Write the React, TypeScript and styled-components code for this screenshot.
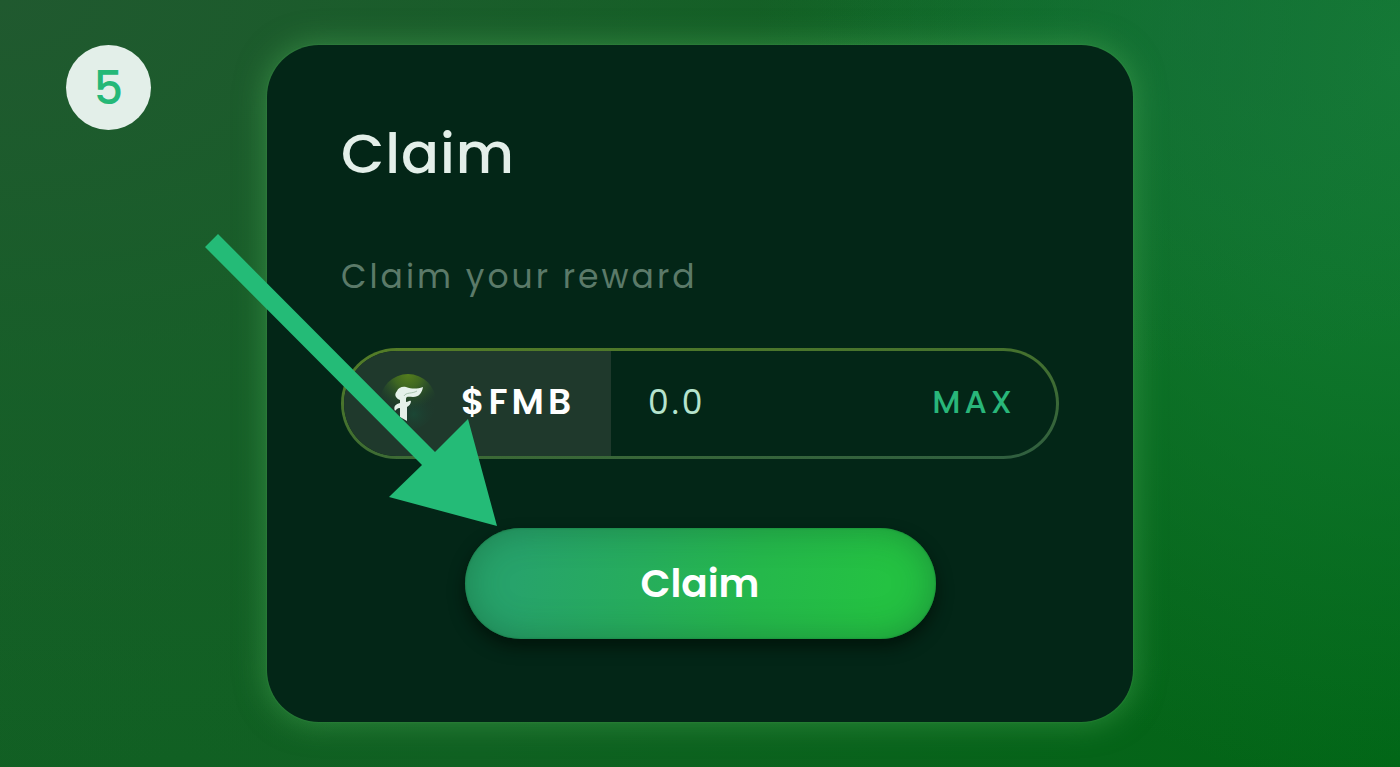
import React, { useState } from "react";
import styled, { createGlobalStyle } from "styled-components";

const GlobalStyle = createGlobalStyle`
  *, *::before, *::after { box-sizing: border-box; }
  body { margin: 0; background: #0a621e; }
  body, button, input { font-family: Poppins, Inter, "Liberation Sans", sans-serif; }
`;

const Page = styled.main`
  min-height: 100vh;
  display: grid;
  grid-template-columns: minmax(0, 1fr) minmax(0, 866px) minmax(0, 1fr);
  align-items: start;
  padding: 45px 0;
  background:
    radial-gradient(ellipse 28% 45% at 86% 4%, rgba(24, 108, 60, 0.5), rgba(24, 110, 60, 0) 100%),
    radial-gradient(ellipse 46% 95% at 100% 8%, #147d35 0%, rgba(18, 122, 50, 0.8) 35%, rgba(12, 110, 36, 0) 100%),
    radial-gradient(ellipse 95% 100% at 0% 0%, #20592f 0%, rgba(27, 94, 44, 0.6) 50%, rgba(22, 98, 38, 0) 100%),
    linear-gradient(100deg, #125f24 0%, #106122 40%, #066419 80%, #016616 100%);
`;

const StepBadge = styled.div`
  width: 85px;
  height: 85px;
  margin-left: 66px;
  display: flex;
  align-items: center;
  justify-content: center;
  border-radius: 50%;
  background: #e3efe9;
  color: #25b877;
  font-size: 46px;
  font-weight: 500;
  line-height: 86px;
`;

const Card = styled.section`
  position: relative;
  display: flex;
  flex-direction: column;
  padding: 73px 74px 83px;
  border-radius: 52px;
  background: #032617;
  box-shadow: 0 0 2px rgba(70, 160, 80, 0.6), 0 0 30px 1px rgba(75, 170, 85, 0.55);
`;

const Title = styled.h1`
  margin: 0;
  color: #e3efe9;
  font-size: 56px;
  font-weight: 500;
  line-height: 72px;
  letter-spacing: 1px;
`;

const Caption = styled.label`
  margin-top: 67px;
  color: #5b7a69;
  font-size: 33px;
  font-weight: 400;
  line-height: 40px;
  letter-spacing: 3px;
`;

const AmountField = styled.div`
  display: flex;
  height: 111px;
  margin-top: 51px;
  border: 3px solid transparent;
  border-radius: 56px;
  overflow: hidden;
  background:
    linear-gradient(#032617, #032617) padding-box,
    linear-gradient(174deg, #557d27 0%, #43702f 45%, #2f5e40 100%) border-box;
`;

const TokenTag = styled.div`
  display: flex;
  flex: none;
  align-items: center;
  gap: 25px;
  width: 267px;
  padding: 0 0 4px 36px;
  background: #1f392c;
  color: #fff;
  font-size: 36px;
  font-weight: 600;
  letter-spacing: 4px;
`;

const AmountInput = styled.input`
  flex: 1;
  min-width: 0;
  padding: 0 0 2px 37px;
  border: 0;
  outline: 0;
  background: none;
  color: #b5e3cd;
  font-size: 33px;
  font-weight: 400;
  letter-spacing: 3px;
`;

const MaxButton = styled.button`
  padding: 0 40px 3px 16px;
  border: 0;
  background: none;
  color: #29b67a;
  font-size: 32px;
  font-weight: 500;
  letter-spacing: 4px;
  cursor: pointer;
`;

const ClaimButton = styled.button`
  align-self: center;
  width: 471px;
  max-width: 100%;
  height: 111px;
  margin-top: 69px;
  padding: 0;
  border: 0;
  border-radius: 56px;
  background: linear-gradient(100deg, #27a36b 12%, #26ad5c 38%, #25b84b 62%, #24c242 88%);
  box-shadow:
    inset 0 0 36px rgba(20, 80, 45, 0.42),
    inset 0 0 2px rgba(10, 90, 40, 0.6),
    0 8px 16px rgba(0, 12, 5, 0.65);
  color: #fff;
  font-size: 39px;
  font-weight: 600;
  cursor: pointer;
`;

const Pointer = styled.svg`
  position: absolute;
  left: -62px;
  top: 189px;
  pointer-events: none;
`;

function TokenLogo() {
  return (
    <svg width="56" height="60" viewBox="0 0 56 60" aria-hidden="true">
      <defs>
        <radialGradient id="coinTop" cx="28" cy="2" r="36" gradientUnits="userSpaceOnUse">
          <stop offset="0" stopColor="#557e1d" />
          <stop offset="0.4" stopColor="#3e6622" />
          <stop offset="1" stopColor="#204a2b" stopOpacity="0" />
        </radialGradient>
        <radialGradient id="coinBottom" cx="34" cy="42" r="24" gradientUnits="userSpaceOnUse">
          <stop offset="0" stopColor="#1b4735" />
          <stop offset="1" stopColor="#1f392c" stopOpacity="0" />
        </radialGradient>
      </defs>
      <circle cx="28" cy="30" r="28" fill="url(#coinBottom)" />
      <circle cx="28" cy="30" r="28" fill="url(#coinTop)" />
      <path
        d="M43 15C42 21 39 25 33 25C29 25 26 24 26 27V30C28 30 29 28 31 29C31 32 29 34 27 35V49L20 45V36C17 36 16 38 15 39C13 34 16 32 20 31V28C15 26 14 22 17 19C18 16 22 14 26 15C32 17 37 17 43 15Z"
        fill="#e5f1ea"
      />
      <path d="M24 24C26 20 32 22 37 19" fill="none" stroke="#a9c4af" strokeWidth="1" />
    </svg>
  );
}

export default function App() {
  const [amount, setAmount] = useState("0.0");
  return (
    <>
      <GlobalStyle />
      <Page>
        <StepBadge>5</StepBadge>
        <Card>
          <Title>Claim</Title>
          <Caption htmlFor="amount">Claim your reward</Caption>
          <AmountField>
            <TokenTag>
              <TokenLogo />
              <span>$FMB</span>
            </TokenTag>
            <AmountInput
              id="amount"
              inputMode="decimal"
              value={amount}
              onChange={(e) => setAmount(e.target.value)}
            />
            <MaxButton type="button">MAX</MaxButton>
          </AmountField>
          <ClaimButton type="button">Claim</ClaimButton>
          <Pointer width="292" height="292" viewBox="0 0 292 292" aria-hidden="true">
            <path d="M13 0L230 218L263 185L292 292L184 263L217 231L0 13Z" fill="#24bb77" />
          </Pointer>
        </Card>
      </Page>
    </>
  );
}
